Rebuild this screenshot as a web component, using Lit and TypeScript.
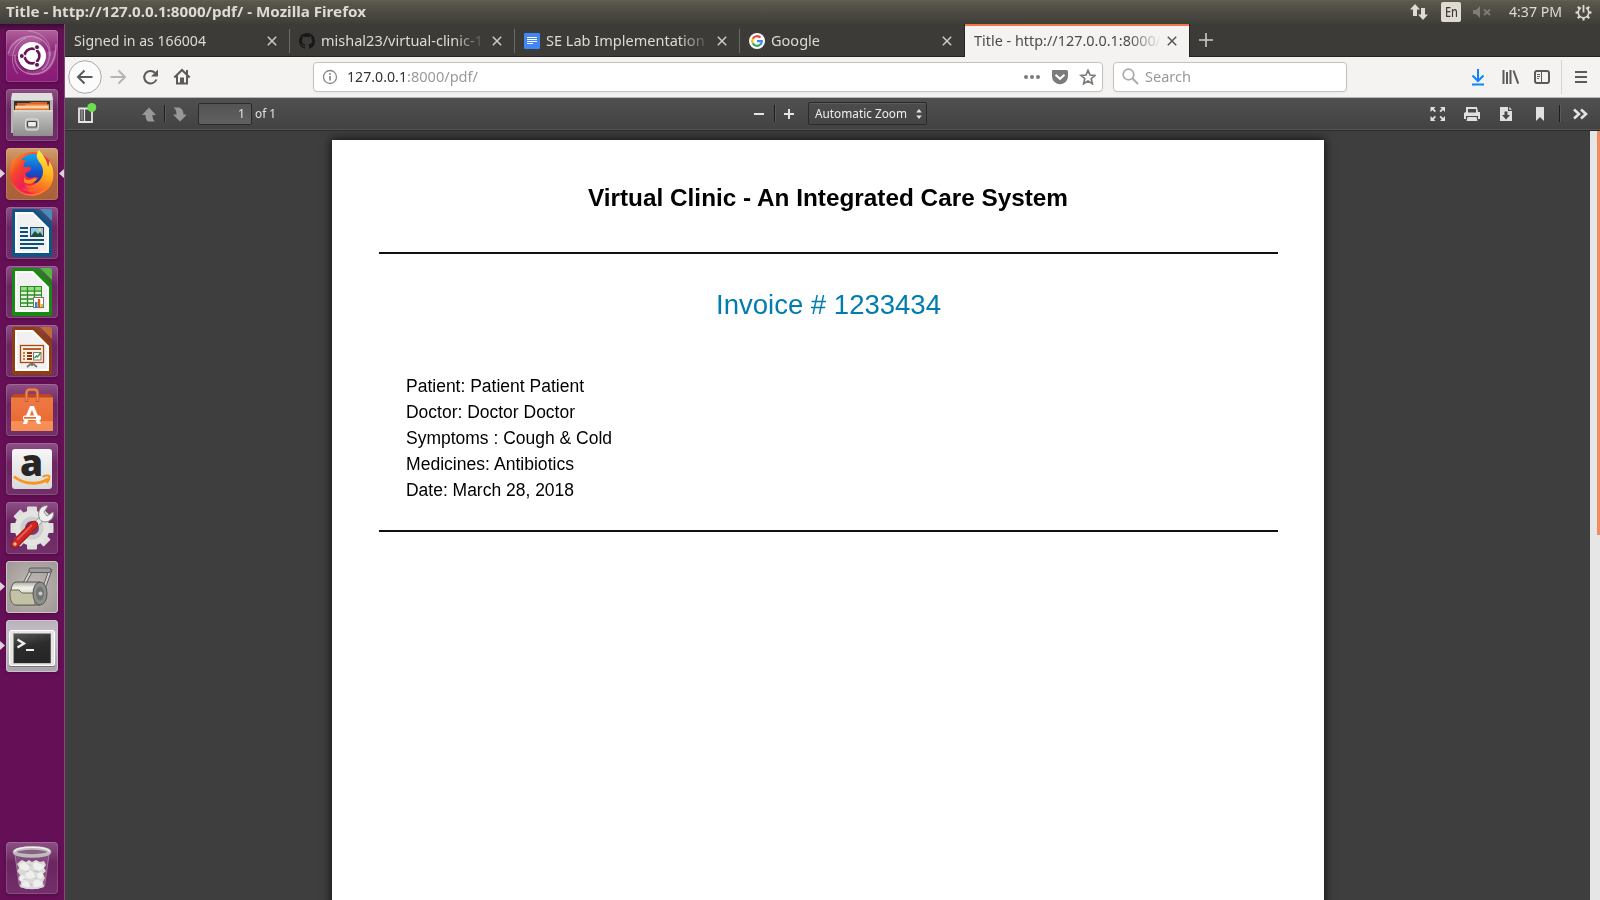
import { LitElement, html, css, svg, nothing } from "lit";
import { customElement, property, state } from "lit/decorators.js";
import { styleMap } from "lit/directives/style-map.js";
import { classMap } from "lit/directives/class-map.js";

/* A single line of text condensed or widened to a given width. */
@customElement("fit-text")
class FitText extends LitElement {
  @property({ type: Number }) w = 0;
  @property() text = "";
  @state() private scale = 1;

  static styles = css`
    :host { display: block; flex: none; white-space: pre; }
    .run { display: inline-block; transform-origin: 0 50%; vertical-align: top; }
  `;

  firstUpdated() {
    const run = this.renderRoot.querySelector(".run") as HTMLElement;
    const natural = run.getBoundingClientRect().width;
    this.style.width = `${this.w}px`;
    if (natural > 0) this.scale = this.w / natural;
  }

  render() {
    return html`<span class="run" style=${styleMap({ transform: `scaleX(${this.scale})` })}>${this.text}</span>`;
  }
}

const officeDoc = (dark: string, mid: string, body: unknown) => svg`
  <path d="M8 2H29L46 19V48a2 2 0 0 1-2 2H8a2 2 0 0 1-2-2V4a2 2 0 0 1 2-2z" fill="${dark}"/>
  <path d="M29 2H34L46 14V19z" fill="${dark}" opacity=".65"/>
  <path d="M9 5H27L43 21V46H9z" fill="#fff"/>
  <path d="M11 7H26L41 22V44H11z" fill="#f1f1f1"/>
  <path d="M34 2H44a2 2 0 0 1 2 2V14z" fill="${mid}"/>
  ${body}`;

const teeth = (cx: number, cy: number, r: number, w: number, h: number, n: number, fill: string) =>
  Array.from({ length: n }, (_, i) => svg`<rect x="${cx - w / 2}" y="${cy - r}" width="${w}" height="${h}" rx="1" fill="${fill}" transform="rotate(${(360 / n) * i} ${cx} ${cy})"/>`);

const launcherArt: Record<string, unknown> = {
  dash: svg`
    <g fill="none" stroke="#fff">
      <path d="M2 24C6 8 24 2 36 10c10 7 10 22 0 30" opacity=".3" stroke-width="1.5"/>
      <path d="M12 44C2 32 6 14 20 8" opacity=".35"/>
      <path d="M50 14C50 34 40 46 24 44 14 42 8 34 9 25" opacity=".35" stroke-width="1.5"/>
      <path d="M22 1C36 2 46 12 44 26" opacity=".3"/>
    </g>
    <path d="M2 26C4 10 22 0 36 10L26 26z M50 20C52 38 36 50 20 43L26 26z" fill="#fff" opacity=".13"/>
    <circle cx="26" cy="27.4" r="14" fill="#3b0733" opacity=".4"/>
    <circle cx="26" cy="26" r="14" fill="#fff"/>
    <circle cx="26" cy="26" r="7.3" fill="none" stroke="#651655" stroke-width="2.8"/>
    <g stroke="#fff" stroke-width="1.5"><path d="M26 26 13 26M26 26 32.5 14.7M26 26 32.5 37.3" stroke="#fff"/></g>
    <circle cx="26" cy="26" r="5.8" fill="#fff"/>
    <g fill="#651655" stroke="#fff" stroke-width="1"><circle cx="15.8" cy="26" r="2.5"/><circle cx="31" cy="17.2" r="2.5"/><circle cx="31" cy="34.8" r="2.5"/></g>`,
  files: svg`
    <path d="M6 5q0-1 1-1H45q1 0 1 1l1 6V44H5V11z" fill="#b5b5b2"/>
    <path d="M6 5q0-1 1-1H45q1 0 1 1l1 6H5z" fill="#dededc"/>
    <rect x="8" y="12" width="36" height="10" fill="#343434"/>
    <path d="M11 14H24l1-1H41V22H11z" fill="#d9652b"/>
    <path d="M9 16.5H19l1-1H43V22H9z" fill="#f3a35f"/><path d="M10 18H42" stroke="#fff0df" stroke-width="1.2"/>
    <path d="M9 20H43V22H9z" fill="#e07b35"/>
    <rect x="7" y="21" width="40" height="26" rx="1" fill="url(#steel)"/>
    <path d="M7.5 22H46.5" stroke="#e4e4e2"/>
    <rect x="19.5" y="30" width="13" height="11" rx="2.5" fill="#b4b4b2" stroke="#e5e5e3"/>
    <rect x="21.5" y="32.5" width="9" height="5.5" rx="1" fill="#ededed" stroke="#444" stroke-width="1.2"/>`,
  firefox: svg`
    <circle cx="26" cy="26" r="22" fill="url(#fox)"/>
    <circle cx="27" cy="20.500" r="14.500" fill="url(#globe)"/>
    <path d="M33 2c-4 5-2 9 1 13 4 5 4 12 0 17-5 6-12 7-18 4 5 10 19 13 27 4 7-9 5-22 0-27 0 3 0 4-1 6-1-7-5-12-9-17z" fill="url(#flame)"/>
    <path d="M4 24C4 17 6 12 9 9c0 3 1 4 2 5 3-2 7-3 10-1-3 1-4 4-3 6 3 0 6-1 7 1 1 2-3 4-5 5-1 3 1 4 4 5 3 0 5-2 8 0-3 5-10 6-16 3 2 5 8 9 14 9-11 5-25-4-26-18z" fill="url(#fox)"/>
    <path d="M18 34c4 3 10 2 13-3-3-2-5 0-8 1-3 0-5-2-5-4" fill="#ff8a16"/>
    <path d="M5 32c5 13 22 20 36 8-7 11-29 12-36-8z" fill="#ffb21c" opacity=".55"/>`,
  writer: officeDoc("#0c5685", "#4a8cb8", svg`
    <path d="M14 21h8M14 25h8M14 29h8M14 33H38M14 37H38M14 41H32" stroke="#0c4f7c" stroke-width="1.8"/>
    <rect x="24.5" y="20.5" width="13" height="9" fill="#8ec8ec" stroke="#24445c"/><path d="M25 29l4-5 3 3 2-2 3 4z" fill="#244f37"/><circle cx="34" cy="22.5" r="1.5" fill="#f4d83f"/>`),
  calc: officeDoc("#178a10", "#55b843", svg`
    <rect x="14.5" y="20.5" width="21" height="20" fill="#e5f7de" stroke="#2e8a25"/><rect x="15" y="21" width="20" height="4" fill="#93df82"/>
    <path d="M14 25.2H36M14 29H36M14 33H36M14 37H36M21.5 20V41M28.5 20V41" stroke="#2e8a25" stroke-width="1.3"/>
    <rect x="27.5" y="31.5" width="10" height="10" fill="#fff" stroke="#777"/>
    <rect x="29" y="36" width="2.4" height="5" fill="#2a86d9"/><rect x="31.8" y="33" width="2.4" height="8" fill="#db5c16"/><rect x="34.6" y="38" width="2.4" height="3" fill="#e9b820"/>`),
  impress: officeDoc("#8f3e11", "#bd6c35", svg`
    <path d="M26 38v3M21 42l5-4 5 4" stroke="#777" stroke-width="1.8" fill="none"/>
    <rect x="14.5" y="20.5" width="23" height="17" fill="#fff1e2" stroke="#a64a18" stroke-width="1.3"/>
    <path d="M17 24H35" stroke="#b14f18" stroke-width="1.8"/>
    <path d="M17 28h2M17 31h2M17 34h2" stroke="#d67846" stroke-width="1.8"/><path d="M21 28h5M21 31h5M21 34h5" stroke="#8b3810" stroke-width="1.8"/>
    <rect x="27.5" y="27.5" width="7.5" height="7.5" fill="#fff" stroke="#777"/><path d="M28.5 33l2-2 1 1 3-4" stroke="#2d9435" stroke-width="1.3" fill="none"/>`),
  software: svg`
    <path d="M5 13l3-3H44l3 3-3 3H8z" fill="#b94a20"/>
    <path d="M5 13.5H47V46q0 1-1 1H6q-1 0-1-1z" fill="url(#bag)"/>
    <path d="M5 37H47V46q0 1-1 1H6q-1 0-1-1z" fill="#f68f55"/>
    <path d="M20.5 18V9q0-3.500 3.500-3.500H28q3.500 0 3.500 3.500V18" fill="none" stroke="#c95a2c" stroke-width="3.4"/>
    <path d="M20.5 17V9q0-3.500 3.500-3.500H28q3.500 0 3.500 3.500V17" fill="none" stroke="#ee8b5d" stroke-width="1.6"/>
    <text x="26" y="40" text-anchor="middle" font-family="Lato, sans-serif" font-weight="900" font-size="25" fill="#fff">A</text>
    <rect x="17" y="31.5" width="18" height="4.6" rx="1.5" fill="#fff"/><rect x="18" y="33" width="12" height="1.700" fill="#e96a32"/>`,
  amazon: svg`
    <rect x="6" y="6" width="40" height="40" rx="3" fill="url(#paper)"/>
    <text x="25.5" y="32.5" text-anchor="middle" font-family="Open Sans, sans-serif" font-weight="800" font-size="37" fill="#262626">a</text>
    <path d="M8 33.5C18 42 33 42 42 36" fill="none" stroke="#f7951d" stroke-width="2.8"/>
    <path d="M36.5 33.800C40 32 43 32.500 43.300 33.200 43.600 35 43 38 40.500 40" fill="none" stroke="#f7951d" stroke-width="2"/>`,
  settings: svg`
    ${teeth(26, 26, 21.5, 10, 10, 8, "#dededc")}
    <circle cx="26" cy="26" r="17.500" fill="#e3e3e1"/><circle cx="26" cy="26" r="11.500" fill="#cfcfcd"/><circle cx="26" cy="26" r="7" fill="#7a3c70"/>
    <path d="M22 31 37 15" stroke="#8f9090" stroke-width="6"/><path d="M22 31 37 15" stroke="#e9eaea" stroke-width="4.500"/>
    <path d="M34 7c2-3 6-4 8-3l-4 6 3 4 6-4c2 4-2 10-8 10s-8-7-5-13z" fill="#efefef" stroke="#888"/>
    <path d="M9 42 28 23" stroke="#8b1110" stroke-width="8.500" stroke-linecap="round"/><path d="M9 42 28 23" stroke="#cf2522" stroke-width="7" stroke-linecap="round"/>
    <path d="M11 38 26 23" stroke="#ee5a50" stroke-width="2"/><circle cx="9" cy="42" r="1.700" fill="#e9c3bd"/>`,
  roller: svg`
    <path d="M17 25 25 10H44L38 27" fill="none" stroke="#555" stroke-width="3.600"/><path d="M17 25 25 10H44L38 27" fill="none" stroke="#d2d2d0" stroke-width="1.900"/>
    <rect x="23" y="7" width="22" height="4.500" rx="2" fill="#9b9c9b" stroke="#5a5a5a"/>
    <path d="M10 21H34V44H10C3 44 3 21 10 21z" fill="url(#drum)" stroke="#5a5b50"/>
    <path d="M4.500 29H13l3 3H29V44H10C5 44 3 36 4.500 29z" fill="#c2c3a4" stroke="#666752"/>
    <ellipse cx="34" cy="32.500" rx="7" ry="11.500" fill="#8d908d" stroke="#555"/><ellipse cx="34" cy="32.500" rx="4" ry="7" fill="#737673"/><circle cx="34.500" cy="32.500" r="2" fill="#c8c8c8"/>`,
  terminal: svg`
    <rect x="3" y="10" width="46" height="37" rx="2" fill="#777"/><rect x="3.500" y="10.500" width="45" height="35" rx="1.500" fill="#e6e6e4" stroke="#fff"/>
    <rect x="7" y="13" width="38" height="30.500" fill="#9b9b9b"/><rect x="8" y="14" width="36.500" height="29" fill="url(#screen)"/>
    <path d="M11.500 19.500 18 23.500 11.500 27.500" fill="none" stroke="#f1f1f1" stroke-width="2.300"/><path d="M20 30H28" stroke="#f1f1f1" stroke-width="2"/>`,
  trash: svg`
    <path d="M9 12H43L38.500 44Q38 47 26 47T13.500 44z" fill="#fff" opacity=".14"/>
    <path d="M13 20 16 18 20 20 23 18 26 20 30 18 34 20 38 19 40 23 38 26 40 29 37 32 39 36 37 40 38 45Q26 49 14 45L15 40 12 37 14 33 11 29 13 26 11 22z" fill="#d9d9d8"/>
    <g fill="#efefee"><path d="M14 22l4-2 4 3 2 3-3 3-4-1-3-2zM27 22l3-2 4 2 4 1-1 4-4 2-5-2zM20 31l4-3 4 3 1 4-5 2-5-2zM31 32l4-2 3 4-3 3-4-1zM14 34l3-1 3 4-2 3-4-2zM16 41l5-2 3 3-1 4-7-1zM27 40l4-3 5 3 0 4-8 2z"/></g>
    <g stroke="#b7b6b6" fill="none" stroke-width=".7"><path d="M20 29l3 1M28 29l5 1M17 38l3-1M29 37l3-1M24 41l2 3M23 22l2 2"/></g>
    <path d="M14 44Q26 49 38 44" fill="none" stroke="#dcd5db" stroke-width="1.500"/><path d="M9 13 13.500 44M43 13 38.500 44" stroke="#c6a7c0" opacity=".6"/>
    <ellipse cx="26" cy="10" rx="17.500" ry="4" fill="#8a6084" stroke="#bcbcba" stroke-width="3.600"/><path d="M8.500 10c0-3 8-4.800 17.500-4.800S43.500 7 43.500 10" fill="none" stroke="#eee" stroke-width="1.500"/>`,
};

const launcher = [
  { id: "dash", bg: "magenta" }, { id: "files" }, { id: "firefox", bg: "amber", left: true, right: true }, { id: "writer" },
  { id: "calc" }, { id: "impress" }, { id: "software" }, { id: "amazon" }, { id: "settings" },
  { id: "roller", bg: "grey", left: true }, { id: "terminal", bg: "silver", left: true }, { id: "trash", bottom: true },
] as { id: string; bg?: string; left?: boolean; right?: boolean; bottom?: boolean }[];

@customElement("app-launcher")
class AppLauncher extends LitElement {
  static styles = css`
    :host { display: flex; flex-direction: column; gap: 7px; box-sizing: border-box; width: 65px; padding: 6px 0 6px 6px; background: linear-gradient(#3d0a35 0, #650f56 7px, #650f56); border-right: 1px solid #854a7b; }
    .tile { position: relative; width: 52px; height: 52px; border-radius: 4px; background: linear-gradient(#8d5086, #6b2560 40%, #72306a); box-shadow: inset 0 0 0 1px #ffffff26, 0 1px 3px #2b052566; flex: none; }
    .magenta { background: linear-gradient(#b0639c, #8f267b 40%, #8a1a78); }
    .amber { background: linear-gradient(#d29e6d, #b3693c 50%, #a9603a); }
    .grey { background: radial-gradient(#c2bab6, #9d9694); box-shadow: inset 0 0 0 1px #c9c3c2, 0 1px 3px #2b052566; }
    .silver { background: linear-gradient(#b9b1ba, #c6c0c7 30%, #aaa2aa); box-shadow: inset 0 0 0 1px #cbc4cc, 0 1px 3px #2b052566; }
    .bottom { margin-top: auto; }
    .art { display: block; width: 52px; height: 52px; }
    .tick { position: absolute; top: 21px; width: 5px; height: 9px; background: #dcd3da; }
    .tick.l { left: -6px; clip-path: polygon(0 0, 100% 50%, 0 100%); }
    .tick.r { right: -6px; clip-path: polygon(100% 0, 0 50%, 100% 100%); }
  `;

  render() {
    return launcher.map((t) => html`
      <div class=${classMap({ tile: true, bottom: !!t.bottom, [t.bg ?? "plain"]: true })}>
        <svg class="art" viewBox="0 0 52 52">
          <defs>
            <linearGradient id="steel" x2="0" y2="1"><stop stop-color="#c9c9c7"/><stop offset="1" stop-color="#8f8f8d"/></linearGradient>
            <linearGradient id="fox" x1="0" y1="0" x2=".9" y2="1"><stop stop-color="#ff9a22"/><stop offset=".35" stop-color="#f4432f"/><stop offset=".7" stop-color="#ef1d5a"/><stop offset="1" stop-color="#ff7b1a"/></linearGradient>
            <linearGradient id="globe" x2="0" y2="1"><stop stop-color="#12a6e8"/><stop offset=".6" stop-color="#1552cf"/><stop offset="1" stop-color="#2a2a8c"/></linearGradient>
            <linearGradient id="flame" x1=".7" y1="0" x2=".4" y2="1"><stop stop-color="#fff04a"/><stop offset=".5" stop-color="#ffb31a"/><stop offset="1" stop-color="#fb4c2e"/></linearGradient>
            <linearGradient id="bag" x2="0" y2="1"><stop stop-color="#ee7a45"/><stop offset="1" stop-color="#e9642b"/></linearGradient>
            <linearGradient id="paper" x2="0" y2="1"><stop stop-color="#f7f7f7"/><stop offset="1" stop-color="#d9d9d9"/></linearGradient>
            <linearGradient id="drum" x2="0" y2="1"><stop stop-color="#a9aba3"/><stop offset=".25" stop-color="#f3f3ee"/><stop offset="1" stop-color="#a5a796"/></linearGradient>
            <linearGradient id="screen" x2=".3" y2="1"><stop stop-color="#555"/><stop offset=".5" stop-color="#2c2c2c"/><stop offset="1" stop-color="#262626"/></linearGradient>
          </defs>
          ${launcherArt[t.id]}
        </svg>
        ${t.left ? html`<span class="tick l"></span>` : nothing}
        ${t.right ? html`<span class="tick r"></span>` : nothing}
      </div>`);
  }
}

const github = svg`<path fill="#191717" d="M8 0C3.580 0 0 3.580 0 8c0 3.540 2.290 6.530 5.470 7.590.4.070.55-.17.55-.38v-1.490c-2.010.37-2.530-.49-2.690-.94-.09-.23-.48-.94-.82-1.130-.28-.15-.68-.52-.01-.53.63-.01 1.080.58 1.230.82.72 1.210 1.870.87 2.330.66.07-.52.28-.87.51-1.070-1.780-.2-3.640-.89-3.640-3.950 0-.87.31-1.590.82-2.150-.08-.2-.36-1.020.08-2.120 0 0 .67-.21 2.200.82a7.600 7.600 0 0 1 4 0c1.530-1.040 2.200-.82 2.200-.82.44 1.100.16 1.920.08 2.120.51.56.82 1.270.82 2.150 0 3.070-1.870 3.750-3.650 3.950.29.25.54.73.54 1.480v2.200c0 .21.15.46.55.38A8 8 0 0 0 16 8c0-4.420-3.580-8-8-8z"/>`;
const docs = svg`<rect width="16" height="16" rx="1" fill="#4285f4"/><path d="M3 4.500H13M3 6.500H13M3 8.500H13M3 10.500H9" stroke="#fff" stroke-width="1"/>`;
const google = svg`<circle cx="8" cy="8" r="8" fill="#fff"/><g fill="none" stroke-width="2.200"><path d="M11.400 4.600A4.800 4.800 0 0 0 3.800 5.700" stroke="#ea4335"/><path d="M3.800 5.700a4.800 4.800 0 0 0 0 4.600" stroke="#fbbc05"/><path d="M3.800 10.300A4.800 4.800 0 0 0 11.200 11.600" stroke="#34a853"/><path d="M11.200 11.600A4.600 4.600 0 0 0 12.800 8.200H8" stroke="#4285f4"/></g>`;

const tabs = [
  { text: "Signed in as 166004", w: 132 },
  { text: "mishal23/virtual-clinic-1", w: 162, icon: github, fade: true },
  { text: "SE Lab Implementation D", w: 173, icon: docs, fade: true },
  { text: "Google", w: 49, icon: google },
  { text: "Title - http://127.0.0.1:8000/", w: 187, active: true, fade: true },
] as { text: string; w: number; icon?: unknown; fade?: boolean; active?: boolean }[];

const ic = (w: number, h: number, body: unknown, cls = "") => html`<svg class="ic ${cls}" width=${w} height=${h} viewBox="0 0 ${w} ${h}">${body}</svg>`;

@customElement("app-root")
class AppRoot extends LitElement {
  static styles = css`
    :host { display: grid; grid-template-columns: 65px 1fr; grid-template-rows: 24px 876px; width: 1600px; height: 900px; overflow: hidden; font-family: "Noto Sans", "Open Sans", sans-serif; font-size: 14px; background: #404040; }
    .ic { display: block; flex: none; }
    .panel { grid-column: 1 / 3; display: flex; align-items: center; padding: 0 8px 0 6px; background: linear-gradient(#69654f 0, #5b584e 1px, #3e3d38); color: #dfdbd2; }
    .panel .title { font-weight: 700; font-size: 13.5px; flex: 1; line-height: 24px; }
    .clock { line-height: 24px; margin: 0 13px 0 18px; }
    .lang { display: flex; justify-content: center; width: 20px; height: 20px; margin: 0 12px 0 13px; border-radius: 2px; background: #dfdbd2; color: #3c3b37; font-size: 13.5px; line-height: 20px; font-weight: 500; }
    .browser { display: flex; flex-direction: column; min-width: 0; }
    .tabs { display: flex; height: 33px; box-sizing: border-box; background: #3c3b37; border-bottom: 1px solid #252422; color: #dfdbd2; }
    .tab { position: relative; display: flex; align-items: center; gap: 6px; width: 225px; height: 33px; box-sizing: border-box; padding: 0 13px 0 9px; flex: none; }
    .tab .line { position: absolute; right: 0; top: 5px; width: 1px; height: 24px; background: #6b6a66; }
    .tab.active { width: 224px; padding-right: 12px; background: #f4f3f2; color: #4c4c4c; border-top: 2px solid #f07746; box-shadow: 1px 0 #252422, -1px 0 #252422; padding-bottom: 2px; }
    .label { flex: 1; min-width: 0; overflow: hidden; line-height: 31px; }
    .label.fade { -webkit-mask-image: linear-gradient(to left, transparent 0, #000 32px); mask-image: linear-gradient(to left, transparent 0, #000 32px); }
    .new { align-self: center; margin-left: 10px; }
    .nav { display: flex; align-items: center; height: 41px; box-sizing: border-box; padding: 0 13px 1px 3px; background: #f4f3f2; border-bottom: 1px solid #b9b7b4; color: #4c4c4c; }
    .field { display: flex; align-items: center; height: 30px; box-sizing: border-box; border: 1px solid #c5c2be; border-radius: 4px; background: #fff; box-shadow: 0 1px 3px #0000000d; }
    .url { width: 790px; margin-left: 122px; padding: 0 6px 0 9px; color: #333; }
    .url .path { color: #9a9a9a; flex: 1; }
    .search { width: 234px; margin-left: 10px; padding-left: 8px; gap: 6px; color: #999; }
    .field fit-text { line-height: 29px; }
    .vr { width: 1px; height: 34px; background: #d7d5d2; margin: 0 13px 0 11px; }
    .pdfbar { display: flex; align-items: center; height: 33px; box-sizing: border-box; padding: 0 12px 1px 13px; background: linear-gradient(#505050, #424242); border-bottom: 1px solid #2b2b2b; box-shadow: inset 0 -1px #555; color: #e2e2e2; font-size: 12px; }
    .pdfbar .sep { width: 1px; height: 17px; background: #1f1f1f; box-shadow: 1px 0 #5a5a5a; }
    .page-no { display: flex; justify-content: flex-end; width: 54px; height: 22px; box-sizing: border-box; border: 1px solid #2a2a2a; border-radius: 2px; background: linear-gradient(#545454, #606060); padding-right: 6px; line-height: 20px; margin: 0 3px 0 12px; font-size: 12.5px; }
    .spacer { flex: 1; }
    .select { display: flex; align-items: center; width: 119px; height: 23px; box-sizing: border-box; border: 1px solid #2a2a2a; border-radius: 2px; background: linear-gradient(#4c4c4c, #454545); box-shadow: inset 0 1px #5a5a5a; padding: 0 6px; gap: 9px; line-height: 21px; margin-left: 13px; color: #eee; }
    .viewer { display: flex; flex: 1; min-height: 0; background: #3e3e3e; }
    .canvas { flex: 1; padding: 9px 0 0 267px; overflow: hidden; }
    .paper { width: 992px; height: 800px; box-sizing: border-box; background: #fff; box-shadow: 0 0 9px 1px #000000b0; padding: 0 46.500px; font-family: "Liberation Sans", Arial, sans-serif; color: #000; }
    .heading { display: flex; justify-content: center; height: 114px; box-sizing: border-box; padding-top: 43px; font-size: 24px; font-weight: 700; line-height: 30px; border-bottom: 2px solid #111; }
    .invoice { display: flex; justify-content: center; padding-top: 31px; height: 108px; box-sizing: border-box; font-size: 28px; line-height: 40px; color: #007cb0; }
    .details { border-bottom: 2px solid #111; padding-left: 27px; height: 170px; box-sizing: border-box; padding-top: 10.500px; font-size: 19.200px; line-height: 26.200px; }
    .scroll { width: 10px; background: #e6e6e6; display: flex; justify-content: flex-end; }
    .thumb { width: 3px; height: 404px; background: #f08c5f; }
  `;

  render() {
    const line = (text: string, w: number) => html`<fit-text text=${text} w=${w}></fit-text>`;
    return html`
      <header class="panel">
        <div class="title">${line("Title - http://127.0.0.1:8000/pdf/ - Mozilla Firefox", 360)}</div>
        ${ic(18, 18, svg`<path d="M5 1 10 6.500H7V13H3V6.500H0zM13 17 8 11.500H11V5H15V11.500H18z" fill="#dfdbd2"/>`)}
        <div class="lang">${line("En", 13)}</div>
        ${ic(18, 12, svg`<path d="M0 4H3L7 0V12L3 8H0z" fill="#7f7d76"/><path d="M11 3.500 17 9M17 3.500 11 9" stroke="#7f7d76" stroke-width="1.800"/>`)}
        <div class="clock">${line("4:37 PM", 53)}</div>
        ${ic(17, 17, svg`<circle cx="8.500" cy="8.500" r="5.300" fill="none" stroke="#dfdbd2" stroke-width="1.600"/>${[45, 90, 135, 180, 225, 270, 315].map((a) => svg`<path d="M8.500 .5V3" stroke="#dfdbd2" stroke-width="2.200" transform="rotate(${a} 8.500 8.500)"/>`)}<path d="M8.500 1V8" stroke="#4b4943" stroke-width="4.500"/><path d="M8.500 1V8.500" stroke="#dfdbd2" stroke-width="1.800"/>`)}
      </header>
      <app-launcher></app-launcher>
      <main class="browser">
        <div class="tabs">
          ${tabs.map((t, i) => html`
            <div class=${classMap({ tab: true, active: !!t.active })}>
              ${t.icon ? ic(16, 16, t.icon) : nothing}
              <div class=${classMap({ label: true, fade: !!t.fade })}>${line(t.text, t.w)}</div>
              ${ic(10, 10, svg`<path d="M.8.8 9.200 9.200M9.200.8.8 9.200" stroke="${t.active ? "#555" : "#cfccc4"}" stroke-width="1.500"/>`)}
              ${i < 3 ? html`<span class="line"></span>` : nothing}
            </div>`)}
          ${ic(14, 14, svg`<path d="M7 0V14M0 7H14" stroke="#cfccc4" stroke-width="1.600"/>`, "new")}
        </div>
        <div class="nav">
          ${ic(123, 34, svg`
            <circle cx="17" cy="17" r="16.300" fill="#fbfbfb" stroke="#aaa8a5"/>
            <path d="M24.500 17H10M16.500 10.500 10 17l6.500 6.500" fill="none" stroke="#5a5a5a" stroke-width="2"/>
            <path d="M42.500 17H57M50.500 10.500 57 17l-6.500 6.500" fill="none" stroke="#b5b4b2" stroke-width="2"/>
            <path d="M88.400 19.500A6.300 6.300 0 1 1 87 12.800" fill="none" stroke="#5a5a5a" stroke-width="2"/><path d="M90 9.500V16.500H83z" fill="#5a5a5a"/>
            <path d="M106.300 17.500 114 10l7.700 7.500" fill="none" stroke="#5a5a5a" stroke-width="2"/><path d="M109 15.500V23.500H119V15.500" fill="none" stroke="#5a5a5a" stroke-width="2"/><rect x="112" y="17.500" width="4" height="6" fill="#5a5a5a"/><path d="M118 10h2v4h-2z" fill="#5a5a5a"/>`)}
          <div class="field url">
            ${ic(24, 16, svg`<circle cx="7" cy="8" r="6.500" fill="none" stroke="#8a8a8a" stroke-width="1.300"/><path d="M7 7V11.500" stroke="#8a8a8a" stroke-width="1.700"/><circle cx="7" cy="4.900" r="1" fill="#8a8a8a"/>`)}
            ${line("127.0.0.1", 60)}
            <div class="path">${line(":8000/pdf/", 71)}</div>
            ${ic(73, 16, svg`
              <g fill="#7b7b7b"><circle cx="3" cy="8" r="2"/><circle cx="9" cy="8" r="2"/><circle cx="15" cy="8" r="2"/></g>
              <path d="M30.500 1H44.500a1.500 1.500 0 0 1 1.500 1.500V7a8 8 0 0 1-16 .500V2.500A1.500 1.500 0 0 1 30.500 1z" transform="translate(-1 0)" fill="#7b7b7b"/><path d="M32.500 5.800 37 9.800 41.500 5.800" fill="none" stroke="#fff" stroke-width="2"/>
              <path d="M65 1.300 67 6 72 6.400 68.200 9.700 69.400 14.700 65 12 60.600 14.700 61.800 9.700 58 6.400 63 6z" fill="none" stroke="#7b7b7b" stroke-width="1.700"/>`)}
          </div>
          <div class="field search">
            ${ic(17, 17, svg`<circle cx="6.500" cy="6.500" r="5.300" fill="none" stroke="#aaa" stroke-width="1.700"/><path d="M10.500 10.500 16 16" stroke="#aaa" stroke-width="2"/>`)}
            ${line("Search", 46)}
          </div>
          ${ic(203, 18, svg`
            <g fill="none" stroke="#0a84ff" stroke-width="2"><path d="M131 1V13M125.500 7.500 131 13l5.500-5.500M125 16.500H137"/></g>
            <path d="M156.500 2V16M160 4V16M163.500 2V16M166.500 2.500 171.200 15.700" fill="none" stroke="#5a5a5a" stroke-width="2"/>
            <rect x="188" y="3" width="14" height="12" rx="2" fill="none" stroke="#5a5a5a" stroke-width="2"/><path d="M194.500 3V15" stroke="#5a5a5a"/><path d="M190 6.500h3M190 8.500h3M190 10.500h2" stroke="#5a5a5a"/>`)}
          <span class="vr"></span>
          ${ic(12, 12, svg`<path d="M0 1H12M0 6H12M0 11H12" stroke="#5a5a5a" stroke-width="1.800"/>`)}
        </div>
        <div class="pdfbar">
          ${ic(86, 22, svg`
            <path d="M1 5.500H14V19H1z" fill="none" stroke="#e6e6e6" stroke-width="1.800"/><path d="M2.500 7H5V17.500H2.500z" fill="#808080"/><path d="M6.500 6V19" stroke="#e6e6e6" stroke-width="1.200"/><circle cx="13.800" cy="4.500" r="4.500" fill="#6fdd50"/>
            <path d="M71 4.500 78 12H74.500C74.500 15 75 17 77 18.500H70C68 17 67.500 15 67.500 12H64z" fill="#989898"/>`)}
          <span class="sep"></span>
          ${ic(21, 22, svg`<path d="M15 18.500 8 11.500H11.500C11.500 8.500 11 6.500 8.500 4.500H14C17.500 6 18.500 8.500 18.500 11.500H22z" fill="#989898"/>`)}
          <div class="page-no">${line("1", 7)}</div>
          ${line("of 1", 21)}
          <span class="spacer"></span>
          ${ic(20, 14, svg`<path d="M0 7H10" stroke="#e4e4e4" stroke-width="2"/>`)}
          <span class="sep"></span>
          ${ic(20, 14, svg`<path d="M9 7H19M14 2V12" stroke="#e4e4e4" stroke-width="2"/>`)}
          <div class="select">${line("Automatic Zoom", 92)}${ic(6, 10, svg`<path d="M3 0 5.800 3.500H.2zM3 10 5.800 6.500H.2z" fill="#e4e4e4"/>`)}</div>
          ${ic(632, 18, svg`
            <g fill="#e0e0e0">
              <path d="M503.500 2h5l-1.700 1.700 2.200 2.200-1.300 1.300-2.200-2.200-2 2zM518 2h-5l1.700 1.700-2.200 2.200 1.300 1.300 2.200-2.200 2 2zM503.500 16h5l-1.700-1.700 2.200-2.200-1.300-1.300-2.200 2.200-2-2zM518 16h-5l1.700-1.700-2.200-2.200 1.300-1.300 2.200 2.200 2-2z"/>
              <path d="M539 2H550L551 7H553V14H551V11H539V14H537V8L539 7zM541 4V7.500H549V4zM540.500 12H549.500L550.500 16H539.500z" fill-rule="evenodd"/>
              <path d="M573 2H581V6H585V16H573zM582.300 2 585 4.700H582.300zM577.500 6.500V10H575L579 14.500 583 10H580.500V6.500z" fill-rule="evenodd"/>
              <path d="M609 2H617V16L613 12 609 16z"/>
            </g>`)}
          <span class="sep"></span>
          ${ic(28, 14, svg`<path d="M14 2.500 19 7 14 11.500M21 2.500 26 7 21 11.500" fill="none" stroke="#e4e4e4" stroke-width="2.600"/>`)}
        </div>
        <div class="viewer">
          <div class="canvas">
            <article class="paper">
              <div class="heading">${line("Virtual Clinic - An Integrated Care System", 480)}</div>
              <div class="invoice">${line("Invoice # 1233434", 225)}</div>
              <div class="details">
                ${line("Patient: Patient Patient", 178)}
                ${line("Doctor: Doctor Doctor", 169)}
                ${line("Symptoms : Cough & Cold", 206)}
                ${line("Medicines: Antibiotics", 168)}
                ${line("Date: March 28, 2018", 168)}
              </div>
            </article>
          </div>
          <div class="scroll"><div class="thumb"></div></div>
        </div>
      </main>`;
  }
}
